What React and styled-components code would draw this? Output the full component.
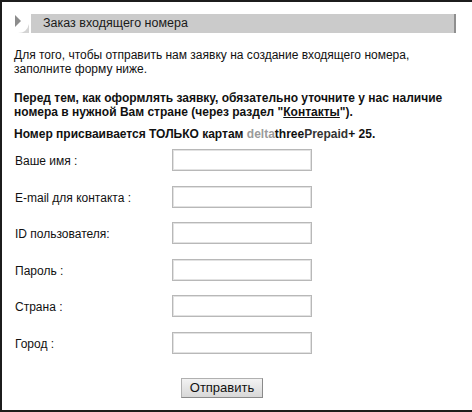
import React from "react";
import styled, { createGlobalStyle } from "styled-components";

const Global = createGlobalStyle`
  html, body { margin: 0; padding: 0; background: #fff; }
  body { font-family: "Liberation Sans", Arial, sans-serif; font-size: 12px; color: #111; }
`;

const Frame = styled.div`
  box-sizing: border-box;
  width: 472px;
  height: 412px;
  border-top: 2px solid #1c1c1c;
  border-left: 2px solid #1c1c1c;
  border-bottom: 2px solid #1c1c1c;
  padding: 12px 16px 0 12px;
  display: flex;
  flex-direction: column;
`;

const Header = styled.div`
  display: flex;
  height: 19px;
  gap: 1px;
`;

const HeaderIcon = styled.svg`
  width: 16px;
  height: 19px;
  flex: none;
  display: block;
`;

const HeaderBar = styled.div`
  flex: 1;
  background: #cbcbcb;
  border-right: 2px solid #8f8f8f;
  padding-left: 12px;
  line-height: 19px;
  font-size: 12.5px;
  color: #1a1a1a;
`;

const Para = styled.p`
  margin: ${(p) => p.$top}px 0 0 0;
  line-height: 14px;
  font-weight: ${(p) => (p.$bold ? 700 : 400)};
`;

const Delta = styled.span`
  color: #9a9a9a;
`;
const Prepaid = styled.span`
  color: #333;
`;
const Link = styled.a`
  color: #111;
  text-decoration: underline;
`;

const Form = styled.div`
  display: grid;
  grid-template-columns: 158px 140px;
  row-gap: 14.6px;
  margin-top: 8px;
`;

const Label = styled.label`
  padding-left: 1px;
  align-self: center;
  line-height: 14px;
  padding-top: 2px;
`;

const Input = styled.input`
  box-sizing: border-box;
  width: 140px;
  height: 22px;
  margin: 0;
  border: 1px solid #b8b8b8;
  box-shadow: inset 0 0 0 1px #e2e2e2;
  background: #fff;
  outline: none;
`;

const Actions = styled.div`
  padding-left: 167px;
  margin-top: 24px;
`;

const Button = styled.button`
  box-sizing: border-box;
  width: 82px;
  height: 20px;
  margin: 0;
  padding: 0;
  font-family: "Liberation Sans", Arial, sans-serif;
  font-size: 13px;
  color: #111;
  background: linear-gradient(#f3f3f3, #d8d8d8);
  border: 1px solid #b0b0b0;
  border-right-color: #8a8a8a;
  border-bottom-color: #8a8a8a;
`;

const fields = ["Ваше имя :", "E-mail для контакта :", "ID пользователя:", "Пароль :", "Страна :", "Город :"];

export default function App() {
  return (
    <>
      <Global />
      <Frame>
        <Header>
          <HeaderIcon viewBox="0 0 16 19">
            <path d="M2 19 L10 19 Q15 19 15 12 L15 19 Z" fill="#e6e6e6" />
            <path d="M4 19 Q13 19 15 10 L15 19 Z" fill="#d4d4d4" />
            <path d="M1 1 L7 7 L1 13 Z" fill="#8c8c8c" />
          </HeaderIcon>
          <HeaderBar>Заказ входящего номера</HeaderBar>
        </Header>
        <Para $top={15}>
          Для того, чтобы отправить нам заявку на создание входящего номера, заполните форму ниже.
        </Para>
        <Para $top={15} $bold>
          Перед тем, как оформлять заявку, обязательно уточните у нас наличие номера в нужной Вам стране (через раздел "<Link href="#">Контакты</Link>").
        </Para>
        <Para $top={8} $bold>
          Номер присваивается ТОЛЬКО картам <Delta>delta</Delta>three<Prepaid>Prepaid</Prepaid>+ 25.
        </Para>
        <Form>
          {fields.map((f) => (
            <React.Fragment key={f}>
              <Label>{f}</Label>
              <Input type="text" />
            </React.Fragment>
          ))}
        </Form>
        <Actions>
          <Button type="button">Отправить</Button>
        </Actions>
      </Frame>
    </>
  );
}
